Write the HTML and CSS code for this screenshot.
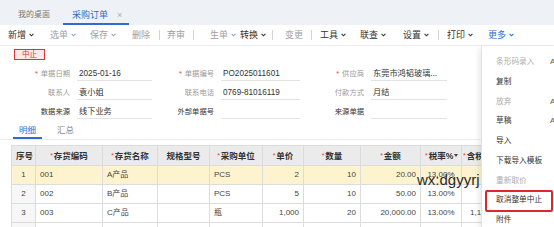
FILE: index.html
```html
<!DOCTYPE html>
<html lang="zh">
<head>
<meta charset="utf-8">
<title>采购订单</title>
<link rel="stylesheet" href="styles.css">
</head>
<body>
<div class="tabbar">
  <span class="tab">我的桌面</span>
  <span class="tab active">采购订单<span class="close">×</span></span>
</div>

<div class="toolbar">
  <span class="btn">新增<svg class="caret" viewBox="0 0 5 4"><path d="M0.6 0.8 L2.5 2.8 L4.4 0.8"/></svg></span>
  <span class="btn dis">选单<svg class="caret" viewBox="0 0 5 4"><path d="M0.6 0.8 L2.5 2.8 L4.4 0.8"/></svg></span>
  <span class="btn dis">保存<svg class="caret" viewBox="0 0 5 4"><path d="M0.6 0.8 L2.5 2.8 L4.4 0.8"/></svg></span>
  <span class="btn dis">删除</span>
  <span class="sep"></span>
  <span class="btn dis">弃审</span>
  <span class="sep"></span>
  <span class="btn dis">生单<svg class="caret" viewBox="0 0 5 4"><path d="M0.6 0.8 L2.5 2.8 L4.4 0.8"/></svg></span>
  <span class="btn">转换<svg class="caret" viewBox="0 0 5 4"><path d="M0.6 0.8 L2.5 2.8 L4.4 0.8"/></svg></span>
  <span class="sep"></span>
  <span class="btn dis">变更</span>
  <span class="sep"></span>
  <span class="btn">工具<svg class="caret" viewBox="0 0 5 4"><path d="M0.6 0.8 L2.5 2.8 L4.4 0.8"/></svg></span>
  <span class="btn">联查<svg class="caret" viewBox="0 0 5 4"><path d="M0.6 0.8 L2.5 2.8 L4.4 0.8"/></svg></span>
  <span class="btn">设置<svg class="caret" viewBox="0 0 5 4"><path d="M0.6 0.8 L2.5 2.8 L4.4 0.8"/></svg></span>
  <span class="sep"></span>
  <span class="btn">打印<svg class="caret" viewBox="0 0 5 4"><path d="M0.6 0.8 L2.5 2.8 L4.4 0.8"/></svg></span>
  <span class="btn more">更多<svg class="caret" viewBox="0 0 5 4"><path d="M0.6 0.8 L2.5 2.8 L4.4 0.8"/></svg></span>
</div>

<div class="status-row"><span class="badge">中止</span></div>

<div class="form">
  <div class="lbl"><span class="req">*</span>单据日期</div>
  <div class="val">2025-01-16</div>
  <div class="lbl"><span class="req">*</span>单据编号</div>
  <div class="val">PO2025011601</div>
  <div class="lbl"><span class="req">*</span>供应商</div>
  <div class="val">东莞市鸿韬玻璃...</div>

  <div class="lbl">联系人</div>
  <div class="val">袁小姐</div>
  <div class="lbl">联系电话</div>
  <div class="val">0769-81016119</div>
  <div class="lbl">付款方式</div>
  <div class="val">月结</div>

  <div class="lbl dark">数据来源</div>
  <div class="val">线下业务</div>
  <div class="lbl dark">外部单据号</div>
  <div class="val"></div>
  <div class="lbl dark">来源单据</div>
  <div class="val"></div>
</div>

<div class="subtabs">
  <span class="stab active">明细</span>
  <span class="stab">汇总</span>
</div>

<table class="grid">
  <colgroup>
    <col class="c-no"><col class="c-code"><col class="c-name"><col class="c-spec"><col class="c-unit">
    <col class="c-price"><col class="c-qty"><col class="c-amt"><col class="c-tax"><col class="c-taxp">
  </colgroup>
  <thead>
    <tr>
      <th>序号</th>
      <th><span class="req">*</span>存货编码</th>
      <th><span class="req">*</span>存货名称</th>
      <th>规格型号</th>
      <th><span class="req">*</span>采购单位</th>
      <th><span class="req">*</span>单价</th>
      <th><span class="req">*</span>数量</th>
      <th><span class="req">*</span>金额</th>
      <th><span class="req">*</span>税率%<svg class="tri" viewBox="0 0 4 3"><path d="M0 0 H4 L2 3 Z"/></svg></th>
      <th class="left"><span class="req">*</span>含税单价</th>
    </tr>
  </thead>
  <tbody>
    <tr class="sel">
      <td class="no">1</td><td>001</td><td>A产品</td><td></td><td>PCS</td>
      <td class="num">2</td><td class="num">10</td><td class="num">20.00</td><td class="ctr">13.00%</td><td class="num"></td>
    </tr>
    <tr>
      <td class="no">2</td><td>002</td><td>B产品</td><td></td><td>PCS</td>
      <td class="num">5</td><td class="num">10</td><td class="num">50.00</td><td class="ctr">13.00%</td><td class="num"></td>
    </tr>
    <tr>
      <td class="no">3</td><td>003</td><td>C产品</td><td></td><td>瓶</td>
      <td class="num">1,000</td><td class="num">20</td><td class="num">20,000.00</td><td class="ctr">13.00%</td><td class="first">1,130</td>
    </tr>
    <tr>
      <td class="no"></td><td></td><td></td><td></td><td></td>
      <td></td><td></td><td></td><td></td><td></td>
    </tr>
  </tbody>
</table>

<div class="watermark">wx:dgyyrj</div>

<div class="menu">
  <div class="mi dis">条形码录入<span class="key">Alt+B</span></div>
  <div class="mi">复制</div>
  <div class="mi dis">放弃<span class="key">Alt+Q</span></div>
  <div class="mi">草稿<span class="key">Alt+D</span></div>
  <div class="mi">导入</div>
  <div class="mi">下载导入模板</div>
  <div class="mi dis">重新取价</div>
  <div class="mi mark">取消整单中止</div>
  <div class="mi">附件</div>
</div>
</body>
</html>
```
FILE: styles.css
```css
* {
  box-sizing: border-box;
  margin: 0;
  padding: 0;
}

html, body {
  width: 554px;
  height: 227px;
  overflow: hidden;
  background: #fff;
}

body {
  position: relative;
  font-family: "Liberation Sans", "Noto Sans CJK SC", sans-serif;
  color: #333;
}

/* ---------- top tabs ---------- */
.tabbar {
  height: 25px;
  background: #eef1f6;
  display: flex;
  padding-left: 18px;
}

.tab {
  font-size: 8px;
  line-height: 12px;
  padding-top: 9px;
  color: #777;
  white-space: nowrap;
}

.tab.active {
  display: flex;
  margin-left: 13px;
  padding: 9px 7px 0 9px;
  font-size: 9px;
  color: #2f6bd0;
  border-bottom: 2px solid #2f6bd0;
}

.close {
  margin-left: 9px;
  color: #b0b0b0;
  font-size: 9px;
}

/* ---------- toolbar ---------- */
.toolbar {
  height: 21px;
  border-bottom: 1px solid #ededed;
  padding-left: 8px;
  display: grid;
  grid-template-columns: 42px 40px 42px 27px 8px 26px 17px 30px 32px 13px 26px 9px 40px 43px 35px 9px 41px auto;
  align-items: center;
  font-size: 9px;
  line-height: 12px;
}

.btn {
  display: flex;
  align-items: center;
  gap: 3px;
  color: #333;
  white-space: nowrap;
}

.btn.dis {
  color: #a0a0a0;
}

.btn.more {
  color: #2f6bd0;
}

.caret {
  width: 5px;
  height: 4px;
  fill: none;
  stroke: currentColor;
  stroke-width: 1.1;
}

.sep {
  width: 1px;
  height: 10px;
  background: #d4d4d4;
}

/* ---------- status badge ---------- */
.status-row {
  padding: 3px 0 0 14px;
  height: 17px;
}

.badge {
  display: block;
  width: 31px;
  height: 11px;
  border: 1px solid #d8372c;
  background: #fde9e7;
  color: #d8372c;
  font-size: 7.5px;
  line-height: 9px;
  text-align: center;
}

/* ---------- header form ---------- */
.form {
  display: grid;
  grid-template-columns: 74px 78px 66px 82px 68px 79px;
  grid-auto-rows: 19px;
}

.lbl {
  font-size: 7.3px;
  line-height: 12px;
  padding-top: 5px;
  padding-right: 4px;
  text-align: right;
  color: #9a9a9a;
  white-space: nowrap;
}

.lbl.dark {
  color: #333;
}

.req {
  color: #e8443a;
  margin-right: 3px;
  font-weight: normal;
}

.val {
  margin-left: 3px;
  height: 18px;
  border-bottom: 1px solid #e3e3e3;
  padding: 5px 0 0 2px;
  font-size: 8.2px;
  line-height: 12px;
  color: #333;
  white-space: nowrap;
  overflow: hidden;
}

/* ---------- detail tabs ---------- */
.subtabs {
  display: flex;
  gap: 9px;
  height: 20px;
  padding-left: 13px;
  border-bottom: 1px solid #ececec;
}

.stab {
  height: 19px;
  padding: 4px 6px 0;
  font-size: 8.5px;
  line-height: 12px;
  color: #888;
}

.stab.active {
  color: #2f6bd0;
  border-bottom: 2px solid #2f6bd0;
}

/* ---------- grid ---------- */
.grid {
  margin: 5px 0 0 11px;
  border-collapse: collapse;
  table-layout: fixed;
  width: 520px;
  font-size: 8px;
}

.c-no { width: 24px; }
.c-code { width: 67px; }
.c-name { width: 55px; }
.c-spec { width: 52px; }
.c-unit { width: 53px; }
.c-price { width: 41px; }
.c-qty { width: 57px; }
.c-amt { width: 60px; }
.c-tax { width: 41px; }
.c-taxp { width: 70px; }

.grid th,
.grid td {
  border: 1px solid #dcdcdc;
  height: 19px;
  padding: 0 4px;
  white-space: nowrap;
  overflow: hidden;
  line-height: 12px;
}

.grid th {
  height: 20px;
  background: #ebebeb;
  font-size: 8.5px;
  font-weight: bold;
  color: #333;
  text-align: center;
}

.grid th.left {
  text-align: left;
  padding-left: 1px;
}

.grid th .req {
  margin-right: 1px;
  font-size: 7px;
  vertical-align: 1px;
}

.tri {
  width: 4px;
  height: 3px;
  margin-left: 1px;
  vertical-align: 2px;
  fill: #444;
}

.grid td {
  color: #444;
}

.grid td.no {
  text-align: center;
  background: #f7f7f7;
}

.grid td.num {
  text-align: right;
}

.grid td.ctr {
  text-align: center;
}

.grid td.first {
  padding-left: 8px;
}

.grid tr.sel td {
  background: #fdf3cf;
}

/* ---------- watermark ---------- */
.watermark {
  position: absolute;
  left: 417px;
  top: 172px;
  font-size: 15px;
  line-height: 15px;
  color: #2b2b2b;
}

/* ---------- dropdown menu ---------- */
.menu {
  position: absolute;
  left: 481px;
  top: 46px;
  width: 73px;
  height: 181px;
  background: #fff;
  border-left: 1px solid #e2e2e2;
  box-shadow: -2px 2px 6px rgba(0, 0, 0, 0.09);
  padding-top: 6px;
  font-size: 7.7px;
}

.mi {
  position: relative;
  height: 19.75px;
  line-height: 19.75px;
  padding-left: 14px;
  color: #333;
  white-space: nowrap;
}

.mi.dis {
  color: #adadad;
}

.key {
  position: absolute;
  left: 68px;
  color: #555;
}

.mi.mark::after {
  content: "";
  position: absolute;
  left: 3px;
  right: 1px;
  top: 0;
  bottom: -2px;
  border: 2px solid #e0262c;
  border-radius: 2px;
}
```
